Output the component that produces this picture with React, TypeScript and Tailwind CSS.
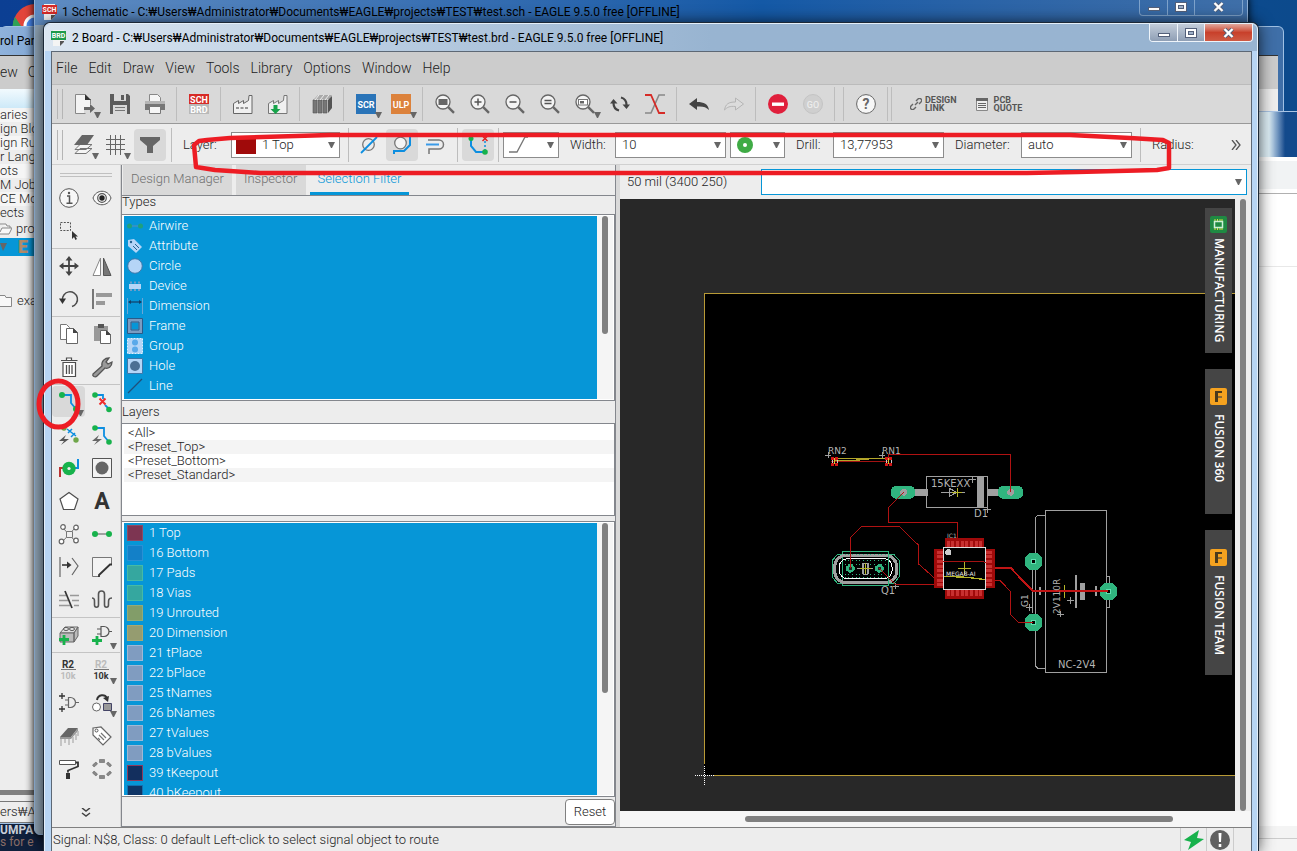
import { useState } from 'react';
import type { ReactNode } from 'react';
import { clsx } from 'clsx';

const GREEN = '#17b24c';
const BLUE = '#0d8ee0';
const DARK = '#4d4d4d';

const lens = (
  <>
    <circle cx="8" cy="8" r="7" fill="#f4f4f4" stroke="#666" strokeWidth="1.3" />
    <path d="M13.2 13.2l5.8 5.6" stroke="#666" strokeWidth="2.4" />
  </>
);

const icons: Record<string, ReactNode> = {
  newFile: (
    <>
      <path d="M10 .5H.5v19h10M15.500 5v5" fill="none" stroke="#888" />
      <path d="M1 1h9l5 5v8H1z" fill="#f3f3f3" />
      <path d="M1 13h8v6H1z" fill="#f3f3f3" />
      <path d="M10 0l6 6h-6z" fill="#333" />
      <path d="M9 13h6v-3l5 4.500-5 4.500v-3H9z" fill="#666" />
    </>
  ),
  save: (
    <>
      <path d="M0 0h18l2 2v18H0z" fill="#5c5c5c" />
      <path d="M4 0h12v7H4zM3 11h14v9H3z" fill="#d9d9d9" />
      <path d="M11 1h3v5h-3z" fill="#5c5c5c" />
      <path d="M5 13.500h10M5 16.500h10" stroke="#777" />
    </>
  ),
  print: (
    <>
      <path d="M4.500.5h8l3 3V8h-11z" fill="#f6f6f6" stroke="#888" />
      <path d="M0 7h20v8H0z" fill="#b5b5b5" />
      <path d="M0 10h20v6H0z" fill="#777" />
      <path d="M4.500 12.500h11v7h-11z" fill="#f6f6f6" stroke="#777" />
    </>
  ),
  schBrd: (
    <>
      <path d="M0 0h20v10H0z" fill="#d62b27" />
      <path d="M0 10h20v10H0z" fill="#b9b9b9" />
      <text x="10" y="8.500" textAnchor="middle" fontSize="9" fontWeight="700" fill="#fff">SCH</text>
      <text x="10" y="18.500" textAnchor="middle" fontSize="9" fontWeight="700" fill="#fff">BRD</text>
    </>
  ),
  factory: (
    <>
      <path d="M.5 19.500v-10l5-3v3l5-3v3l5-3 .5-5h3v18z" fill="#f0f0f0" stroke="#666" />
      <path d="M3 14h3m1.500 0h3m1.500 0h3" stroke="#777" strokeWidth="1.600" />
    </>
  ),
  factoryDown: (
    <>
      <path d="M.5 19.500v-10l5-3v3l5-3v3l5-3 .5-5h3v18z" fill="#f0f0f0" stroke="#777" />
      <path d="M5.500 11h4v4h3l-5 5-5-5h3z" fill="#17a34a" />
    </>
  ),
  books: (
    <>
      <path d="M1 6l5-5h14l-2 4H1z" fill="#aaa" />
      <path d="M1 6h4v13H1zM6 6h4v13H6zM11 6h4v13h-4z" fill="#777" stroke="#555" strokeWidth=".6" />
      <path d="M16 6l4-4v12l-4 5z" fill="#555" />
      <path d="M3 6l4-5M8 6l4-5M13 6l4-5" stroke="#eee" />
    </>
  ),
  scr: (
    <>
      <path d="M0 0h20v20H0z" fill="#2a74b8" />
      <text x="10" y="13.500" textAnchor="middle" fontSize="9" fontWeight="700" fill="#fff">SCR</text>
    </>
  ),
  ulp: (
    <>
      <path d="M0 0h20v20H0z" fill="#dc823c" />
      <text x="10" y="13.500" textAnchor="middle" fontSize="9" fontWeight="600" fill="#fff">ULP</text>
    </>
  ),
  zoomFit: <>{lens}<rect x="3.500" y="5" width="9" height="6" fill="#666" /></>,
  zoomIn: <>{lens}<path d="M4.500 8h7M8 4.500v7" stroke="#555" strokeWidth="1.500" /></>,
  zoomOut: <>{lens}<path d="M4.500 8h7" stroke="#555" strokeWidth="1.500" /></>,
  zoomRedraw: <>{lens}<path d="M4.500 6.500h7M4.500 9.500h7" stroke="#555" strokeWidth="1.400" /></>,
  zoomSelect: <>{lens}<rect x="3.500" y="5.500" width="9" height="5.500" fill="#fff" stroke="#777" /><path d="M5 7h4v2.500H5z" fill="#666" /></>,
  refresh: (
    <>
      <path d="M3.500 9c0 4 1.500 6.500 5.500 7.500M16.500 11c0-4-1.500-6.500-5.500-7.500" fill="none" stroke="#444" strokeWidth="2.200" />
      <path d="M0 9.500L3.500 5 7.500 9.500zM12.500 10.500h7.500L16.500 15z" fill="#444" />
    </>
  ),
  cross: (
    <>
      <path d="M20 1h-6L6 19H0" fill="none" stroke="#888" strokeWidth="1.600" />
      <path d="M0 1h6l8 18h6" fill="none" stroke="#d62b27" strokeWidth="1.800" />
    </>
  ),
  undo: <path d="M0 10l8-6v4c7 0 11 2 12 8-3-3-6-4-12-3.500V16z" fill="#444" />,
  redo: <path d="M19.500 10l-8-6v4c-7 0-10 2-11 8 3-3 5-4 11-3.500V16z" fill="#dcdcdc" stroke="#b5b5b5" />,
  stop: (
    <>
      <circle cx="10" cy="10" r="10" fill="#e0203c" />
      <path d="M4 8.500h12v3.400H4z" fill="#fff" />
    </>
  ),
  go: (
    <>
      <circle cx="10" cy="10" r="9.500" fill="#cfcfcf" stroke="#c4c4c4" />
      <text x="10" y="13.500" textAnchor="middle" fontSize="9" fontWeight="500" fill="#ececec">GO</text>
    </>
  ),
  help: (
    <>
      <circle cx="10" cy="10" r="9.400" fill="#f7f7f7" stroke="#666" />
      <text x="10" y="15" textAnchor="middle" fontSize="14" fontWeight="700" fill="#666">?</text>
    </>
  ),
  layers: (
    <>
      <path d="M1 18.500l5-5h12l-6 5zM1 14.500l5-5h12l-6 5z" fill="#f5f5f5" stroke="#777" />
      <path d="M0 10L8 0h12l-7 10z" fill="#666" />
    </>
  ),
  grid: <path d="M4.500 0v20M9.500 0v20M14.500 0v20M0 4.500h19M0 9.500h19M0 14.500h19" stroke="#666" />,
  filter: <path d="M0 2h20v3l-7 6v7H7v-7L0 5z" fill="#666" />,
  viaOff: (
    <>
      <circle cx="9.500" cy="9.500" r="5.800" fill="none" stroke="#777" strokeWidth="1.300" />
      <path d="M2 18L18 2" stroke={BLUE} strokeWidth="1.800" />
    </>
  ),
  viaAround: (
    <>
      <circle cx="8.500" cy="8" r="5.800" fill="#f5f5f5" stroke="#777" strokeWidth="1.300" />
      <path d="M2 19v-3h10l6-6V2" fill="none" stroke={BLUE} strokeWidth="2" />
    </>
  ),
  push: (
    <>
      <path d="M2 5h11a4.500 4.500 0 010 9H3v5" fill="none" stroke="#777" strokeWidth="1.500" />
      <path d="M0 9.500h13" stroke="#3a9be8" strokeWidth="2" />
    </>
  ),
  loopRemove: (
    <>
      <path d="M3 4v7l5 6h8" fill="none" stroke={BLUE} strokeWidth="2" />
      <path d="M17 6v9" stroke={BLUE} strokeWidth="1.500" strokeDasharray="2 2" />
      <path d="M14.500 1l5 5M19.500 1l-5 5" stroke="#e02020" strokeWidth="1.500" />
      <circle cx="3" cy="3.500" r="2.500" fill={GREEN} />
      <circle cx="17" cy="17" r="2.800" fill={GREEN} />
    </>
  ),
  info: (
    <>
      <circle cx="10" cy="10" r="9.300" fill="#f7f7f7" stroke="#555" />
      <path d="M8 8h2.500v7M7.500 15.300h6" fill="none" stroke="#555" strokeWidth="1.500" />
      <circle cx="10" cy="5" r="1.200" fill="#555" />
    </>
  ),
  eye: (
    <>
      <path d="M1 10c3-9 15-9 18 0-3 9-15 9-18 0z" fill="#f7f7f7" stroke="#555" />
      <circle cx="10" cy="10" r="4.300" fill="none" stroke="#555" strokeWidth="1.200" />
      <circle cx="10" cy="10" r="2.700" fill="#222" />
    </>
  ),
  marquee: (
    <>
      <path d="M1.500 1.500h10v8h-10z" fill="none" stroke="#555" strokeDasharray="2 1.300" />
      <path d="M13 10v8l2-2 1.500 3 1.500-1-1.500-2.500H19z" fill="#333" />
    </>
  ),
  move: (
    <>
      <path d="M10 3v14M3 10h14" stroke="#444" strokeWidth="1.800" />
      <path d="M10 0l3.500 4.500h-7zM10 20l3.500-4.500h-7zM0 10l4.500-3.500v7zM20 10l-4.500-3.500v7z" fill="#444" />
    </>
  ),
  mirror: (
    <>
      <path d="M8.500 2v17.500H1z" fill="#fff" stroke="#888" />
      <path d="M11.500 2v17.500H19z" fill="#777" stroke="#555" />
    </>
  ),
  rotate: (
    <>
      <path d="M3.500 11A7.500 7.500 0 1113 17.500" fill="none" stroke={DARK} strokeWidth="1.500" />
      <path d="M0 9.500h7l-3.500 5.500z" fill="#333" />
    </>
  ),
  align: (
    <>
      <path d="M1 0v20" stroke="#444" strokeWidth="1.400" />
      <path d="M4 4h16v4H4zM4 12h9v4H4z" fill="#999" />
    </>
  ),
  copy: (
    <>
      <path d="M1.500.5h6l3 3v12h-9z" fill="#fff" stroke="#777" />
      <path d="M7.500 4.500h7l4 4v11h-11z" fill="#fff" stroke="#666" />
      <path d="M14 4l5 5h-5z" fill="#444" />
    </>
  ),
  paste: (
    <>
      <path d="M2 2h14v15H2z" fill="#999" />
      <path d="M6 0h6v4H6z" fill="#555" />
      <path d="M8.500 6.500h6l4 4v9h-10z" fill="#fff" stroke="#666" />
      <path d="M14 6l5 5h-5z" fill="#444" />
    </>
  ),
  trash: (
    <>
      <path d="M4 5.500h12.500v14H4zM2 3.500h16.500M7.500 3V1h5v2" fill="#fff" stroke={DARK} strokeWidth="1.200" />
      <path d="M7.500 8v9M10.250 8v9M13 8v9" stroke={DARK} strokeWidth="1.300" />
    </>
  ),
  wrench: <path d="M1 17l9-8c-1-5 3-8 7-8l-3 4 2 2 4-2c0 5-4 7-7 6l-8 8c-2 2-5 0-4-2z" fill="#999" stroke="#555" strokeWidth="1.300" />,
  route: (
    <>
      <path d="M3 3h9v8l5 6" fill="none" stroke={BLUE} strokeWidth="1.800" />
      <circle cx="3" cy="3" r="3" fill={GREEN} />
      <circle cx="17" cy="17" r="3" fill={GREEN} />
    </>
  ),
  ripup: (
    <>
      <path d="M3 3h8v4M13 13l4 4" fill="none" stroke={BLUE} strokeWidth="1.800" />
      <circle cx="3" cy="3" r="2.800" fill={GREEN} />
      <circle cx="17" cy="17.500" r="2.800" fill={GREEN} />
      <path d="M7.500 6.500l6 6M13.500 6.500l-6 6" stroke="#ee2e2e" strokeWidth="2" />
    </>
  ),
  fanout: (
    <>
      <circle cx="5" cy="3" r="2.700" fill="#6fa64a" />
      <circle cx="17" cy="15" r="2.700" fill="#6fa64a" />
      <path d="M9 8l4-4M12 12l4-4M8 4l9 7" stroke={BLUE} strokeWidth="1.500" />
      <path d="M7 10l-7 6h5l-3 4 8-6H5z" fill="#555" />
    </>
  ),
  autoroute: (
    <>
      <path d="M3 3h9v8l5 6" fill="none" stroke={BLUE} strokeWidth="1.800" />
      <circle cx="3" cy="3" r="2.800" fill={GREEN} />
      <circle cx="17" cy="17" r="2.800" fill={GREEN} />
      <path d="M7 10l-7 6h5l-3 4 8-6H5z" fill="#666" />
    </>
  ),
  via: (
    <>
      <path d="M1 19v-9h6" fill="none" stroke="#b33" strokeWidth="2" />
      <path d="M13 10h6V1" fill="none" stroke={BLUE} strokeWidth="2" />
      <circle cx="10" cy="10.500" r="6.700" fill={GREEN} />
      <circle cx="10" cy="10.500" r="1.600" fill="#eee" />
    </>
  ),
  hole: (
    <>
      <path d="M.5.5h19v19H.5z" fill="#f3f3f3" stroke="#555" />
      <circle cx="10" cy="10" r="6.500" fill="#666" />
    </>
  ),
  polygon: <path d="M10 1.500l9 6.500-3.500 10.500h-11L1 8z" fill="#fff" stroke={DARK} strokeWidth="1.200" />,
  text: <text x="10" y="18" textAnchor="middle" fontSize="23" fontWeight="700" fill="#333">A</text>,
  net: (
    <>
      <path d="M4 4l12 13M16 4L4 17" stroke="#777" />
      <path d="M7.500 7.500h6v6h-6z" fill="#eee" stroke="#777" />
      <g fill="#fff" stroke="#666" strokeWidth="1.200">
        <circle cx="4" cy="3" r="2.300" /><circle cx="17" cy="3.500" r="2.300" />
        <circle cx="2.500" cy="17.500" r="2.300" /><circle cx="17" cy="16.500" r="2.300" />
      </g>
    </>
  ),
  signal: (
    <>
      <path d="M3 10h14" stroke="#999" strokeWidth="1.800" />
      <circle cx="3" cy="10" r="3" fill={GREEN} />
      <circle cx="17" cy="10" r="3" fill={GREEN} />
    </>
  ),
  split: (
    <>
      <path d="M1 0v20M13 1l6 8-6 9" fill="none" stroke="#666" strokeWidth="1.200" />
      <path d="M3 8h6" stroke="#333" strokeWidth="1.600" />
      <path d="M8 4.500L12.500 8 8 11.500z" fill="#333" />
    </>
  ),
  miter: (
    <>
      <path d="M19.500 7V.5H.5v19H7" fill="#f3f3f3" stroke="#777" />
      <path d="M20 7.500h-2L7 18v2" fill="none" stroke="#333" strokeWidth="1.800" />
    </>
  ),
  slice: (
    <>
      <path d="M0 5.500h7M0 10.500h9M0 15.500h11M11 5.500h9M13 10.500h7M15 15.500h5" stroke="#999" strokeWidth="1.300" />
      <path d="M6 1l7 17" stroke="#333" strokeWidth="1.700" />
    </>
  ),
  meander: <path d="M0 8c3 0 2.500 2 2.500 7 0 3 4 3 4 0V4c0-4 6-4 6 0v11c0 3 4 3 4 0 0-5-.5-7 3.500-7" fill="none" stroke="#555" strokeWidth="1.600" />,
  addPart: (
    <>
      <path d="M1 8l5-6h13l-4 6z" fill="#ddd" stroke="#666" />
      <path d="M1 8h14v9H1zM15 8l4-6v9l-4 6z" fill="#bbb" stroke="#666" />
      <ellipse cx="7" cy="4" rx="2.500" ry="1.500" fill="#eee" stroke="#555" /><ellipse cx="13" cy="4" rx="2.500" ry="1.500" fill="#eee" stroke="#555" />
      <path d="M0 14.500h10M5 10v10" stroke={GREEN} strokeWidth="2.800" />
    </>
  ),
  addGate: (
    <>
      <path d="M9 1.500h3a5 5 0 010 10H9zM5 4h4M5 9h4M17 6.500h3" fill="none" stroke="#555" strokeWidth="1.200" />
      <path d="M0 15.500h10M5 11v9" stroke={GREEN} strokeWidth="2.800" />
    </>
  ),
  name: (
    <>
      <text x="9" y="8" textAnchor="middle" fontSize="10" fontWeight="700" fill="#333">R2</text>
      <path d="M2 9.500h15" stroke="#777" />
      <text x="9" y="18.500" textAnchor="middle" fontSize="9" fontWeight="700" fill="#bbb">10k</text>
    </>
  ),
  value: (
    <>
      <text x="9" y="8" textAnchor="middle" fontSize="10" fontWeight="700" fill="#bbb">R2</text>
      <path d="M2 9.500h15" stroke="#777" />
      <text x="9" y="18.500" textAnchor="middle" fontSize="9" fontWeight="700" fill="#333">10k</text>
    </>
  ),
  invoke: (
    <>
      <path d="M9.500 4.500h2a5 5 0 010 10h-2zM6 7h3M6 12h3M17 9.500h3" fill="none" stroke="#666" strokeWidth="1.200" />
      <path d="M0 3h6M3 0v6M0 16h6M3 13v6" stroke="#333" strokeWidth="1.300" />
    </>
  ),
  replace: (
    <>
      <circle cx="4.500" cy="14" r="4" fill="#fff" stroke="#666" />
      <path d="M11.500 10.500h8v7h-8z" fill="#999" stroke="#446" />
      <path d="M5 7c1-6 8-6 10-2" fill="none" stroke="#333" strokeWidth="2" />
      <path d="M11 5l6-2-1 6z" fill="#333" />
    </>
  ),
  chip: (
    <>
      <path d="M1 11L9 2h10l-7 9z" fill="#666" />
      <path d="M1 11h11v2H1zM12 11l7-9v3l-7 8z" fill="#999" />
      <path d="M2 13v7M6 13v4M10 13v6M14 11v6M17 8v6M19 5v5" stroke="#bbb" strokeWidth="1.600" />
    </>
  ),
  tag: (
    <>
      <path d="M1 2l8-1 10 10-8 8L1 9z" fill="#fff" stroke="#666" strokeWidth="1.200" />
      <circle cx="4.500" cy="4.500" r="1.500" fill="#fff" stroke="#555" />
      <path d="M7 9l5 5M9 7l5 5M6 12l2 2" stroke="#777" strokeWidth="1.200" />
    </>
  ),
  paint: (
    <>
      <path d="M.5 1.500h16v4H.5z" fill="#fff" stroke="#555" />
      <path d="M17 3.500h2v4l-10 4v2" fill="none" stroke="#333" strokeWidth="1.800" />
      <path d="M7 14h4v6H7z" fill="#333" />
    </>
  ),
  optimize: (
    <g fill="#888" stroke="#666" strokeWidth=".6">
      <path d="M7.500.5h5v3h-5zM7.500 16.500h5v3h-5z" />
      <path d="M.5 6l3.500-3 1.500 2-3.500 3zM19.500 6L16 3l-1.500 2 3.500 3zM.5 14L4 17l1.500-2-3.500-3zM19.500 14L16 17l-1.500-2 3.500-3z" />
    </g>
  ),
};

function Icon({ name }: { name: string }) {
  return (
    <svg width="20" height="20" viewBox="0 0 20 20" className="shrink-0 overflow-visible font-[Roboto,sans-serif]">
      {icons[name]}
    </svg>
  );
}

function Caret({ className }: { className?: string }) {
  return (
    <svg width="7" height="6" viewBox="0 0 7 6" className={clsx('pointer-events-none absolute', className)}>
      <path d="M0 0h7L4 6H3z" fill="#666" />
    </svg>
  );
}

interface ToolProps {
  icon: string;
  label: string;
  menu?: boolean;
  active?: boolean;
  className?: string;
}

function Tool({ icon, label, menu, active, className }: ToolProps) {
  return (
    <button
      type="button"
      aria-label={label}
      className={clsx('relative flex shrink-0 items-center justify-center', active && 'rounded-sm bg-[#d9d9d9]', className)}
    >
      <Icon name={icon} />
      {menu && <Caret className="right-px bottom-px" />}
    </button>
  );
}

const Grip = () => <div className="h-[30px] w-[6px] shrink-0 border-x border-[#b5b5b5]" />;

type BarItem = [icon: string, label: string, menu?: boolean] | null;

const mainBar: BarItem[] = [
  ['newFile', 'New', true], ['save', 'Save'], ['print', 'Print'], null,
  ['schBrd', 'Switch to schematic'], null,
  ['factory', 'CAM processor'], ['factoryDown', 'Generate CAM data'], null,
  ['books', 'Library'], null,
  ['scr', 'Execute script', true], ['ulp', 'Run ULP', true], null,
  ['zoomFit', 'Zoom to fit'], ['zoomIn', 'Zoom in'], ['zoomOut', 'Zoom out'], ['zoomRedraw', 'Redraw'],
  ['zoomSelect', 'Zoom select', true], ['refresh', 'Refresh'], ['cross', 'Cross'], null,
  ['undo', 'Undo'], ['redo', 'Redo'], null,
  ['stop', 'Stop'], ['go', 'Go'], null, null,
  ['help', 'Help'], null,
];

const toolRows: ([ToolProps, ToolProps?] | null)[] = [
  [{ icon: 'info', label: 'Info' }, { icon: 'eye', label: 'Show' }],
  [{ icon: 'marquee', label: 'Group' }],
  null,
  [{ icon: 'move', label: 'Move' }, { icon: 'mirror', label: 'Mirror' }],
  [{ icon: 'rotate', label: 'Rotate' }, { icon: 'align', label: 'Align' }],
  null,
  [{ icon: 'copy', label: 'Copy' }, { icon: 'paste', label: 'Paste' }],
  [{ icon: 'trash', label: 'Delete' }, { icon: 'wrench', label: 'Change' }],
  null,
  [{ icon: 'route', label: 'Route', menu: true, active: true }, { icon: 'ripup', label: 'Ripup' }],
  [{ icon: 'fanout', label: 'Fanout' }, { icon: 'autoroute', label: 'Autorouter' }],
  [{ icon: 'via', label: 'Via' }, { icon: 'hole', label: 'Hole' }],
  [{ icon: 'polygon', label: 'Polygon' }, { icon: 'text', label: 'Text' }],
  [{ icon: 'net', label: 'Ratsnest' }, { icon: 'signal', label: 'Signal' }],
  [{ icon: 'split', label: 'Split' }, { icon: 'miter', label: 'Miter' }],
  [{ icon: 'slice', label: 'Slice' }, { icon: 'meander', label: 'Meander' }],
  null,
  [{ icon: 'addPart', label: 'Add part' }, { icon: 'addGate', label: 'Add gate', menu: true }],
  null,
  [{ icon: 'name', label: 'Name' }, { icon: 'value', label: 'Value', menu: true }],
  [{ icon: 'invoke', label: 'Invoke' }, { icon: 'replace', label: 'Replace', menu: true }],
  [{ icon: 'chip', label: 'Package' }, { icon: 'tag', label: 'Attribute' }],
  [{ icon: 'paint', label: 'Paint' }, { icon: 'optimize', label: 'Optimize' }],
];

const PALE = '#b5d5f7';
const types: [string, ReactNode][] = [
  ['Airwire', <><path d="M2 8h12" stroke="#3f90c0" strokeWidth="1.500" /><circle cx="2.500" cy="8" r="2.500" fill="#1fa07c" /><circle cx="13.500" cy="8" r="2.500" fill="#1fa07c" /></>],
  ['Attribute', <><path d="M1 2l6-1 8 8-6 6-8-7z" fill={PALE} /><circle cx="4" cy="4" r="1.200" fill="#27618f" /><path d="M6 8l4 4M8 6l4 4" stroke="#27618f" /></>],
  ['Circle', <circle cx="8" cy="8" r="7.300" fill={PALE} stroke="#3d78ab" />],
  ['Device', <><path d="M2 6h12v5H2z" fill={PALE} /><path d="M4 3.500v2M8 3.500v2M12 3.500v2M4 11v2M8 11v2M12 11v2" stroke="#6f9dc8" strokeWidth="2" /></>],
  ['Dimension', <><path d="M.5 0v16M15.500 0v16" stroke="#6ba6d6" /><path d="M2 4h12" stroke="#143f66" strokeWidth="1.200" /><path d="M1 4l3-2v4zM15 4l-3-2v4z" fill="#143f66" /></>],
  ['Frame', <><path d="M2.500 2.500h11v11h-11z" fill="none" stroke="#7a9cc2" strokeWidth="4" /><path d="M.5.5h15v15H.5zM4 4h8v8H4z" fill="none" stroke="#2a5a88" /></>],
  ['Group', <><path d="M.5.5h15v15H.5z" fill={PALE} stroke="#e2f0ff" strokeDasharray="2 1" /><circle cx="8" cy="4.500" r="3" fill="#5aa9ea" /><circle cx="8" cy="11.500" r="3" fill="#5aa9ea" /></>],
  ['Hole', <><path d="M.5.5h15v15H.5z" fill={PALE} stroke="#3d78ab" /><circle cx="8" cy="8" r="5" fill="#4c6f94" /></>],
  ['Line', <path d="M1 15L15 1" stroke="#1f4f7a" strokeWidth="1.200" />],
];

const layers = [
  { name: '1 Top', swatch: 'bg-[#7d3552] border-[#8d4a66]' },
  { name: '16 Bottom', swatch: 'bg-[#1380c8] border-[#2a90d4]' },
  { name: '17 Pads', swatch: 'bg-[#35a79f] border-[#46baa4]' },
  { name: '18 Vias', swatch: 'bg-[#35a79f] border-[#46baa4]' },
  { name: '19 Unrouted', swatch: 'bg-[#829d69] border-[#90ab78]' },
  { name: '20 Dimension', swatch: 'bg-[#959c70] border-[#a8a870]' },
  { name: '21 tPlace', swatch: 'bg-[#809cc0] border-[#9fb8d4]' },
  { name: '22 bPlace', swatch: 'bg-[#809cc0] border-[#9fb8d4]' },
  { name: '25 tNames', swatch: 'bg-[#809cc0] border-[#9fb8d4]' },
  { name: '26 bNames', swatch: 'bg-[#809cc0] border-[#9fb8d4]' },
  { name: '27 tValues', swatch: 'bg-[#809cc0] border-[#9fb8d4]' },
  { name: '28 bValues', swatch: 'bg-[#809cc0] border-[#9fb8d4]' },
  { name: '39 tKeepout', swatch: 'bg-[#132f5e] border-[#8d3a5c]' },
  { name: '40 bKeepout', swatch: 'bg-[#0f3566] border-[#1370b0]' },
];

const presets = ['<All>', '<Preset_Top>', '<Preset_Bottom>', '<Preset_Standard>'];

interface ComboProps {
  id: string;
  label: string;
  value?: string;
  className: string;
  children?: ReactNode;
}

function Combo({ id, label, value = '', className, children }: ComboProps) {
  return (
    <div className={clsx('relative h-[26px] shrink-0', className)}>
      <select
        id={id}
        aria-label={label}
        className={clsx(
          'h-full w-full appearance-none border border-[#8c8c8c] bg-white text-[13px] outline-none',
          id === 'layer' ? 'pl-[30px]' : 'pl-1.5'
        )}
      >
        <option>{value}</option>
      </select>
      {children}
      <Caret className="top-[10px] right-[5px]" />
    </div>
  );
}

const Sep = ({ className }: { className?: string }) => (
  <div className={clsx('h-[34px] w-px shrink-0 bg-[#bdbdbd]', className)} />
);

function ParameterBar() {
  return (
    <div className="flex h-[41px] shrink-0 items-center overflow-hidden border-b border-[#d0d0d0] bg-[#ededed] pt-0.5 pl-[5px] text-[13px]">
      <Grip />
      <Tool icon="layers" label="Layer settings" menu className="ml-[5px] h-[30px] w-8" />
      <Tool icon="grid" label="Grid" menu className="h-[30px] w-8" />
      <Tool icon="filter" label="Filter" active className="ml-0.5 h-8 w-8" />
      <Sep className="ml-[5px]" />
      <label htmlFor="layer" className="ml-[11px] w-12">Layer:</label>
      <Combo id="layer" label="Layer" value="1 Top" className="w-[109px]">
        <span className="pointer-events-none absolute top-1 left-[5px] h-[18px] w-5 bg-[#a00a0a]" />
      </Combo>
      <Sep className="ml-2" />
      <Tool icon="viaOff" label="Ignore obstacles" className="ml-[3px] h-8 w-[34px]" />
      <Tool icon="viaAround" label="Walk around" active className="h-8 w-8" />
      <Tool icon="push" label="Push" className="h-8 w-9" />
      <Sep className="mx-[3px]" />
      <Tool icon="loopRemove" label="Loop removal" active className="ml-px h-8 w-8" />
      <Sep className="mx-1" />
      <Combo id="bend" label="Bend style" className="w-[56px]">
        <svg width="20" height="20" viewBox="0 0 20 20" className="pointer-events-none absolute top-[3px] left-1.5">
          <path d="M0 17h8l8-15h3" fill="none" stroke="#777" strokeWidth="1.300" />
        </svg>
      </Combo>
      <label htmlFor="width" className="ml-[11px] w-[45px]">Width:</label>
      <Combo id="width" label="Width" value="10" className="w-[111px]" />
      <Combo id="via-shape" label="Via shape" className="ml-1 w-[55px]">
        <span className="pointer-events-none absolute top-[5px] left-[7px] flex h-4 w-4 items-center justify-center rounded-full bg-[#3fab45]">
          <span className="h-1 w-1 rounded-full bg-white" />
        </span>
      </Combo>
      <label htmlFor="drill" className="ml-[11px] w-[37px]">Drill:</label>
      <Combo id="drill" label="Drill" value="13,77953" className="w-[111px]" />
      <label htmlFor="diameter" className="ml-[11px] w-[66px] shrink-0">Diameter:</label>
      <Combo id="diameter" label="Diameter" value="auto" className="w-[111px]" />
      <Sep className="ml-2" />
      <span className="ml-[11px]">Radius:</span>
      <button type="button" aria-label="More" className="mr-2.5 ml-auto">
        <svg width="10" height="10" viewBox="0 0 10 10">
          <path d="M1 0l4 5-4 5M5 0l4 5-4 5" fill="none" stroke="#555" strokeWidth="1.300" />
        </svg>
      </button>
    </div>
  );
}

function SelectionFilter() {
  const [tab, setTab] = useState('Selection Filter');

  return (
    <div className="flex w-[495px] shrink-0 flex-col border-x border-[#84878d]">
      <div role="tablist" className="flex h-[31px] shrink-0 items-stretch gap-1 border-b border-[#84878d] pl-px text-[13px]">
        {['Design Manager', 'Inspector', 'Selection Filter'].map((name) => (
          <button
            key={name}
            type="button"
            role="tab"
            aria-selected={tab === name}
            onClick={() => setTab(name)}
            className={clsx(
              'border-b-[3px] px-2',
              tab === name ? 'border-[#0696d7] text-[#0696d7]' : 'border-[#d9d9d9] bg-[#d9d9d9] text-[#707070]'
            )}
          >
            {name}
          </button>
        ))}
      </div>
      <h2 className="h-[18px] shrink-0 text-[13px] leading-3">Types</h2>
      <div className="flex h-[187px] shrink-0 justify-between border border-l-0 border-[#84878d] bg-white p-px pl-0.5">
        <ul className="flex-1 overflow-hidden bg-[#0696d7] text-[13px] text-white">
          {types.map(([name, icon]) => (
            <li key={name} className="flex h-5 items-center gap-1.5 pl-[3px]">
              <svg width="16" height="16" viewBox="0 0 16 16">{icon}</svg>
              {name}
            </li>
          ))}
        </ul>
        <div className="w-4 bg-[#f5f5f5] pl-[5px]">
          <div className="h-[118px] w-[6px] rounded-full bg-[#808080]" />
        </div>
      </div>
      <h2 className="h-[22px] shrink-0 text-[13px] leading-[22px]">Layers</h2>
      <ul className="h-[93px] shrink-0 border border-l-0 border-[#84878d] bg-white pt-0.5 pl-0.5 text-[13px] leading-[14px]">
        {presets.map((name) => (
          <li key={name} className="h-[14px] pl-1 even:bg-[#f4f4f4]">{name}</li>
        ))}
      </ul>
      <div className="mt-[5px] flex min-h-0 flex-1 justify-between border border-l-0 border-[#84878d] bg-white p-px pl-0.5">
        <ul className="flex-1 overflow-hidden bg-[#0696d7] text-[13px] text-white">
          {layers.map(({ name, swatch }) => (
            <li key={name} className="flex h-5 items-center gap-1.5 pl-[3px]">
              <span className={clsx('h-4 w-4 border', swatch)} />
              {name}
            </li>
          ))}
        </ul>
        <div className="w-4 bg-[#f5f5f5] pl-[5px]">
          <div className="h-[170px] w-[6px] rounded-full bg-[#808080]" />
        </div>
      </div>
      <div className="flex h-[30px] shrink-0 items-center justify-end border-b border-[#84878d]">
        <button type="button" className="h-[26px] w-[50px] rounded-[4px] border border-[#808080] bg-white text-[13px]">Reset</button>
      </div>
    </div>
  );
}

const pins = [0, 1, 2, 3, 4, 5, 6, 7];

function Plus({ x, y, r = 9, color = '#a0a0a0' }: { x: number; y: number; r?: number; color?: string }) {
  return <path d={`M${x - r} ${y}h${r * 2}M${x} ${y - r}v${r * 2}`} stroke={color} strokeWidth="3" fill="none" />;
}

function OctPad({ x, y }: { x: number; y: number }) {
  return (
    <g transform={`translate(${x} ${y})`}>
      <path d="M-11-26h22l15 15v22l-15 15h-22l-15-15v-22z" fill="#30b57f" />
      <path d="M-6-6H6V6H-6z" fill="#000" stroke="#5fe0b0" strokeWidth="3" />
    </g>
  );
}

function Board() {
  return (
    <svg className="absolute inset-0 h-full w-full font-['DejaVu_Sans',sans-serif] font-normal" shapeRendering="crispEdges">
      <rect x="84" y="94" width="100%" height="482" fill="#000" />
      <path d="M84.500 565V94.500" stroke="#b89a36" />
      <line x1="84" y1="94.500" x2="100%" y2="94.500" stroke="#b89a36" />
      <line x1="94" y1="576.500" x2="100%" y2="576.500" stroke="#b89a36" />
      <path d="M75 576.500h20M84.500 567v20" stroke="#fff" strokeDasharray="1 1" />
      <svg x="180" y="231" width="340" height="260" viewBox="0 0 1020 780">
        {/* resistor networks */}
        <path d="M94 94h172" stroke="#a31212" strokeWidth="3" />
        <path d="M104 86h160M104 92h50l52-5" stroke="#b3a62a" strokeWidth="4" fill="none" />
        <path d="M94 82h7v7h-7zM106 82h7v7h-7zM94 100h7v7h-7zM106 100h7v7h-7zM256 82h7v7h-7zM268 82h7v7h-7zM256 100h7v7h-7zM268 100h7v7h-7z" fill="#d01515" />
        <path d="M96 89v10M111 89v10M258 89v10M273 89v10" stroke="#ccc" strokeWidth="3" />
        <path d="M104 85v18M265 83v20" stroke="#d8ca30" strokeWidth="4" />
        <Plus x={85} y={76} />
        <Plus x={247} y={76} />

        {/* diode D1 */}
        <path d="M340 177h44v20h-44zM563 177h40v20h-40zM531 139h21v94h-21z" fill="#a0a0a0" />
        <path d="M379 139h184v94H379z" fill="none" stroke="#a0a0a0" strokeWidth="3" />
        <rect x="273" y="168" width="72" height="38" rx="14" fill="#30b57f" />
        <rect x="594" y="168" width="75" height="38" rx="14" fill="#30b57f" />
        <circle cx="311" cy="187" r="10" fill="#a0a0a0" />
        <circle cx="632" cy="187" r="10" fill="#a0a0a0" />
        <path d="M423 187h72M448 175v24l22-12zM471 175v24" fill="none" stroke="#a0a0a0" strokeWidth="3" />
        <path d="M455 187h30M472 173v28" stroke="#b5b52a" strokeWidth="3" />
        <Plus x={517} y={148} r={10} />
        <Plus x={562} y={239} r={10} />

        {/* crystal Q1 */}
        <path d="M128 364h138v102H128zM112 374h170l16 18v48l-16 20H112l-16-20v-48z" fill="none" stroke="#30b57f" strokeWidth="3" />
        <rect x="104" y="376" width="186" height="82" rx="34" fill="none" stroke="#a0a0a0" strokeWidth="9" />
        <rect x="118" y="386" width="158" height="60" rx="24" fill="none" stroke="#fff" strokeWidth="3" />
        <path d="M134 372h130M134 392h126M134 404h126M134 432h126M134 443h126" stroke="#30b57f" strokeWidth="3" strokeDasharray="3 8" />
        <path d="M266 366v98" stroke="#30b57f" strokeWidth="3" />
        <path d="M172 416h14v-14M186 400v32M206 400v32M206 416h12M191 400h10v32h-10z" fill="none" stroke="#a0a0a0" strokeWidth="3" />
        <Plus x={196} y={416} r={16} color="#b5b52a" />
        {[151, 238].map((x) => (
          <g key={x}>
            <path d={`M${x} 401l14 10v9l-14 10-14-10v-9z`} fill="#30b57f" />
            <circle cx={x} cy="415" r="5" fill="#222" />
          </g>
        ))}
        <Plus x={287} y={469} />

        {/* controller IC1 */}
        <path d="M435 324h117v30H435zM435 478h117v29H435zM402 357h29v117h-29zM556 357h29v117h-29z" fill="#a00a0a" />
        {pins.map((i) => (
          <g key={i} fill="#c83030">
            <rect x={440 + i * 14} y="334" width="9" height="18" />
            <rect x={440 + i * 14} y="480" width="9" height="18" />
            <rect x="411" y={362 + i * 14} width="19" height="9" />
            <rect x="558" y={362 + i * 14} width="19" height="9" />
          </g>
        ))}
        <rect x="430" y="352" width="127" height="127" fill="#000" stroke="#ddd" strokeWidth="3" />
        <circle cx="445" cy="367" r="9" fill="#ccc" />
        <path d="M430 395h120l7 4" fill="none" stroke="#a31212" strokeWidth="3" />
        <path d="M432 439l70 3 54 7" fill="none" stroke="#b5b52a" strokeWidth="4" />
        <Plus x={493} y={415} r={20} color="#b5b52a" />

        {/* battery G1 */}
        <path d="M737 241h183v486H737zM737 256h-24l-7 8v443l8 8h23M706 480v18M920 439h9v93h-9" fill="none" stroke="#a0a0a0" strokeWidth="3" />
        <path d="M698 420v130" stroke="#a0a0a0" strokeWidth="3" />
        <path d="M828 435v98M719 471v24M888 468v30" stroke="#a0a0a0" strokeWidth="5" />
        <path d="M840 459h15v51h-15z" fill="#a0a0a0" />
        <path d="M794 465v38" stroke="#b5b52a" strokeWidth="3" />
        <OctPad x={700} y={394} />
        <OctPad x={700} y={578} />
        <OctPad x={925} y={484} />
        <Plus x={812} y={512} r={10} />
        <Plus x={782} y={552} r={10} />
        <Plus x={688} y={532} r={10} />

        {/* routed traces */}
        <g fill="none" stroke="#b01212" strokeWidth="3">
          <path d="M265 84V73h367v112M311 187l-46 46v44h208v47" />
          <path d="M151 415v-91l33-34h115l57 56v56l46 41M238 415l48 48h116" />
          <path d="M585 451h15l31 33v69l24 24h45" />
          <path d="M585 413h46l68 70h226" stroke="#c01515" strokeWidth="6" />
        </g>
      </svg>
      <g fill="#b4b4b4" fontSize="10">
        <text x="208" y="255" fontSize="9">RN2</text>
        <text x="262" y="255" fontSize="9">RN1</text>
        <text x="311" y="288">15KEXX</text>
        <text x="354" y="318">D1</text>
        <text x="261" y="395">Q1</text>
        <text x="327" y="339" fontSize="6">IC1</text>
        <text x="326" y="377" fontSize="6" fill="#e8e8e8">MEGA8-AI</text>
        <text x="438" y="469">NC-2V4</text>
        <text x="408" y="408" transform="rotate(-90 408 408)" fontSize="9">G1</text>
        <text x="440" y="415" transform="rotate(-90 440 415)" fontSize="9">2V110R</text>
      </g>
    </svg>
  );
}

function FusionLogo() {
  return (
    <svg width="17" height="17" viewBox="0 0 17 17">
      <rect width="17" height="17" rx="2" fill="#f5a21f" />
      <path d="M5 3h7v2H8v3h4v2H8v4H5z" fill="#4a3a1c" />
      <path d="M8 8h4v2H8z" fill="#8c6a35" />
    </svg>
  );
}

function MakeLogo() {
  return (
    <svg width="17" height="17" viewBox="0 0 17 17">
      <rect width="17" height="17" rx="2" fill="#1f8a43" />
      <path d="M5 3v11M7.500 3v11M10 3v11M12 3v11" stroke="#d8dc3a" />
      <rect x="4.500" y="5.500" width="8" height="6" fill="#1f8a43" stroke="#cdf0d6" strokeWidth="1.500" />
    </svg>
  );
}

const sideTabs = [
  { name: 'MANUFACTURING', logo: <MakeLogo />, spacing: 'pt-2 gap-[5px]' },
  { name: 'FUSION 360', logo: <FusionLogo />, spacing: 'pt-[19px] gap-[9px]' },
  { name: 'FUSION TEAM', logo: <FusionLogo />, spacing: 'pt-[19px] gap-[9px]' },
];

function Editor() {
  return (
    <div className="flex min-w-0 flex-1 flex-col">
      <div className="flex h-[34px] shrink-0 items-center pr-1 pl-[7px] text-[13px]">
        <label htmlFor="command" className="w-[134px] shrink-0">50 mil (3400 250)</label>
        <div className="relative flex-1">
          <input id="command" type="text" className="h-[26px] w-full border border-[#0696d7] bg-white px-1 outline-none" />
          <Caret className="top-[10px] right-[5px]" />
        </div>
      </div>
      <div className="flex min-h-0 flex-1">
        <div className="relative flex-1 overflow-hidden bg-[#282828]">
          <Board />
          <div className="absolute top-[9px] right-[3px] flex flex-col gap-4">
            {sideTabs.map(({ name, logo, spacing }) => (
              <button
                key={name}
                type="button"
                className={clsx("flex h-[145px] w-[27px] flex-col items-center bg-[#454545] font-['Open_Sans',sans-serif] text-[12px] leading-4 font-semibold text-white", spacing)}
              >
                {logo}
                <span className="[writing-mode:vertical-rl]">{name}</span>
              </button>
            ))}
          </div>
        </div>
        <div className="w-4 shrink-0 bg-[#ededed] pl-[5px]">
          <div className="h-full w-[6px] rounded-full bg-[#808080]" />
        </div>
      </div>
      <div className="flex h-4 shrink-0 items-center bg-[#f6f6f6] pr-[78px]">
        <div className="ml-[125px] h-[6px] flex-1 rounded-full bg-[#808080]" />
      </div>
    </div>
  );
}

function DocIcon({ kind }: { kind: 'SCH' | 'BRD' }) {
  return (
    <svg width="15" height="16" viewBox="0 0 15 16" className="shrink-0">
      <path d="M2 0h11v12l-4 4H2z" fill="#f4f4f4" />
      <path d="M13 11v1l-4 4v-5z" fill="#555" />
      <path d="M0 1h15v9H0z" fill={kind === 'SCH' ? '#d62b27' : '#1d9a4a'} />
      <text x="7.500" y="8" textAnchor="middle" fontSize="7" fontWeight="700" fill="#fff">{kind}</text>
    </svg>
  );
}

function CaptionButtons({ active }: { active?: boolean }) {
  return (
    <div className={clsx('flex h-[18px] shrink-0 overflow-hidden rounded-b border border-t-0', active ? 'border-[#eef4fa]' : 'border-[#7ea3cc]')}>
      <button type="button" aria-label="Minimize" className={clsx('flex w-[28px] items-center justify-center border-r pt-1', active ? 'border-[#eef4fa] bg-linear-to-b from-[#c3cdda] to-[#8f9fb5]' : 'border-[#7ea3cc]')}>
        <span className="h-1 w-3 border border-[#53607a] bg-white" />
      </button>
      <button type="button" aria-label="Maximize" className={clsx('flex w-[27px] items-center justify-center border-r', active ? 'border-[#eef4fa] bg-linear-to-b from-[#c3cdda] to-[#8f9fb5]' : 'border-[#7ea3cc]')}>
        <span className="flex h-[10px] w-3 items-center justify-center border border-[#53607a] bg-white">
          <span className="h-1 w-1.5 border border-[#53607a] bg-[#9fb1c9]" />
        </span>
      </button>
      <button type="button" aria-label="Close" className={clsx('flex w-[47px] items-center justify-center', active && 'bg-linear-to-b from-[#e0a79d] via-[#c8402b] to-[#cf5a44]')}>
        <svg width="11" height="10" viewBox="0 0 11 10">
          <path d="M1.500 1l8 8M9.500 1l-8 8" stroke="#53607a" strokeWidth="4" />
          <path d="M1.500 1l8 8M9.500 1l-8 8" stroke="#fff" strokeWidth="2.400" />
        </svg>
      </button>
    </div>
  );
}

const treeRows = ['aries', 'ign Blo', 'ign Ru', 'r Lang', 'ots', 'M Jobs', 'CE Mo', 'ects'];

function ControlPanel() {
  return (
    <div className="absolute top-[26px] right-[13px] bottom-[27px] left-0 flex flex-col rounded-t-md border border-l-0 border-[#9fc0e4] bg-[#3f6fa8] pr-[5px]">
      <div className="h-7 shrink-0 bg-linear-to-r from-[#8fb2dc] to-[#3f6fa8] to-20% pt-1.5 text-[12px] leading-4 font-normal text-black">rol Par</div>
      <div className="flex h-[34px] shrink-0 items-center gap-2.5 border-t border-[#333] bg-[#ccc] text-[14px]"><span>ew</span><span>O</span></div>
      <div className="flex flex-1 flex-col bg-[#ededed] text-[13px] leading-[14px]">
        <div className="h-[19px] w-16 shrink-0 bg-linear-to-b from-[#f2fafe] to-[#cde9f8]" />
        <ul className="w-16">
          {treeRows.map((row) => (
            <li key={row} className="h-[14px] whitespace-nowrap odd:bg-[#f5f5f5]">{row}</li>
          ))}
          <li className="flex h-[18px] items-center gap-1">
            <svg width="12" height="12" viewBox="0 0 12 12" className="shrink-0"><path d="M0 1h6l1 2h3v2M0 11h9l3-6H2L0 9" fill="#f8f8f8" stroke="#888" /></svg>
            pro
          </li>
          <li className="flex h-[18px] items-center gap-[11px] bg-[#0696d7]">
            <svg width="7" height="8" viewBox="0 0 7 8" className="shrink-0"><path d="M0 0h7L3 8z" fill="#666" /></svg>
            <span className="text-[18px] font-black text-[#b08a68]">E</span>
          </li>
          <li className="mt-9 flex h-[18px] items-center gap-[5px]">
            <svg width="12" height="12" viewBox="0 0 12 12" className="shrink-0"><path d="M0 .5h5l1 2h5.500v9H0" fill="#f8f8f8" stroke="#888" /></svg>
            exa
          </li>
        </ul>
        <div className="mt-auto h-[5px] bg-[#808080]" />
        <div className="mt-1.5 flex h-[22px] items-center border-y border-[#777] text-[13px]">ers₩A</div>
      </div>
    </div>
  );
}

export default function App() {
  return (
    <div className="relative h-screen overflow-hidden bg-linear-to-r from-[#0c3f93] via-[#0b4aa0] to-[#0c4a8c] font-[Roboto,'Noto_Sans_CJK_KR',sans-serif] font-light text-[#222]">
      {/* desktop behind the windows */}
      <svg width="46" height="46" viewBox="0 0 46 46" className="absolute top-[3px] left-[12px]">
        <circle cx="23" cy="23" r="22" fill="#e2453a" />
        <path d="M3 14l12 18-2 12A22 22 0 013 14z" fill="#2fa257" />
        <circle cx="23" cy="23" r="10" fill="#4688f1" stroke="#fff" strokeWidth="3" />
      </svg>
      <div className="absolute bottom-0 left-0 h-[27px] w-full bg-[#10203c] text-[12px] leading-3 font-bold whitespace-nowrap text-[#c8ced8]">
        <p>UMPA</p>
        <p className="font-normal text-[#8b6d66]">s for e</p>
      </div>
      <ControlPanel />

      {/* browser window peeking out on the right */}
      <div className="absolute top-[111px] right-0 bottom-0 flex w-20 flex-col border-t border-[#a9c4e4] bg-white">
        <div className="h-[45px] shrink-0 bg-linear-to-r from-[#dff0f8] from-65% to-[#134a8c] to-85%" />
        <div className="mt-1 h-7 shrink-0 bg-[#f1f3f4]" />
        <div className="mt-1 h-px shrink-0 bg-[#b0b0b0]" />
        <div className="mt-[72px] h-px shrink-0 bg-[#e8e8e8]" />
        <div className="mt-auto h-[25px] bg-[#f4f4f4]"><div className="h-[13px] border-b border-[#ccc]" /></div>
      </div>

      {/* schematic window */}
      <section className="absolute -top-1.5 right-[49px] bottom-4 left-[34px] rounded-md border border-[#8fb0d6] bg-[#8fa3b4] shadow-[0_0_8px_#000]">
        <header className="flex h-[30px] justify-between bg-linear-to-r from-[#5f8cc2] via-[#1459a6] via-60% to-[#3f6fa8] pr-1 pl-[7px]">
          <h1 className="flex items-center gap-[5px] pt-1 text-[12px] font-normal whitespace-nowrap text-black">
            <DocIcon kind="SCH" />
            1 Schematic - C:₩Users₩Administrator₩Documents₩EAGLE₩projects₩TEST₩test.sch - EAGLE 9.5.0 free [OFFLINE]
          </h1>
          <div className="pt-[3px]"><CaptionButtons /></div>
        </header>
      </section>

      {/* board window */}
      <section className="absolute top-[23px] right-[39px] -bottom-px left-[44px] flex flex-col rounded-t-md border border-[#e4eff9] bg-[#b7d5f4] pr-[5px] pl-1.5 shadow-[0_0_0_1px_#1c2836,0_0_16px_rgba(0,0,0,0.8)]">
        <header className="-mr-[5px] -ml-1.5 flex h-[27px] shrink-0 justify-between rounded-t-md bg-linear-to-r from-[#dbe6f1] to-[#98b4d1] to-55% pr-1 pl-1.5">
          <h1 className="flex items-center gap-1.5 text-[12px] font-normal whitespace-nowrap text-black">
            <DocIcon kind="BRD" />
            2 Board - C:₩Users₩Administrator₩Documents₩EAGLE₩projects₩TEST₩test.brd - EAGLE 9.5.0 free [OFFLINE]
          </h1>
          <CaptionButtons active />
        </header>
        <main className="flex min-h-0 flex-1 flex-col border border-b-0 border-[#5d6875] bg-[#ededed]">
          <nav className="flex h-8 shrink-0 items-center gap-[11px] bg-[#ccc] pl-1 text-[14px]">
            {['File', 'Edit', 'Draw', 'View', 'Tools', 'Library', 'Options', 'Window', 'Help'].map((item) => (
              <button key={item} type="button">{item}</button>
            ))}
          </nav>
          <div className="flex h-10 shrink-0 items-center overflow-hidden border-t border-b border-t-[#bbb] border-b-[#999] bg-[#d9d9d9] pl-[5px]">
            <Grip />
            <div className="w-1 shrink-0" />
            {mainBar.map((item, i) =>
              item ? (
                <Tool key={i} icon={item[0]} label={item[1]} menu={item[2]} className="h-[30px] w-[35px]" />
              ) : (
                <Sep key={i} className="mx-1" />
              )
            )}
            <Sep className="-ml-px" />
            <button type="button" className="ml-[18px] flex shrink-0 items-center gap-[3px] text-left text-[9px] leading-[8px] font-bold text-[#555]">
              <svg width="12" height="12" viewBox="0 0 12 12">
                <path d="M5 7L8 4M6 3l2-2a2 2 0 013 3L9 6M6 9l-2 2a2 2 0 01-3-3l2-2" fill="none" stroke="#666" strokeWidth="1.400" />
              </svg>
              <span className="flex flex-col"><span>DESIGN</span><span>LINK</span></span>
            </button>
            <button type="button" className="ml-[19px] flex shrink-0 items-center gap-1.5 text-left text-[9px] leading-[8px] font-bold text-[#555]">
              <svg width="12" height="13" viewBox="0 0 12 13">
                <path d="M.5.5h11v12H.5z" fill="#eee" stroke="#888" />
                <path d="M0 0h12v3H0zM2 5h8v1H2zM2 7h8v1H2zM2 9h8v1H2z" fill="#666" />
              </svg>
              <span className="flex flex-col"><span>PCB</span><span>QUOTE</span></span>
            </button>
          </div>
          <ParameterBar />
          <div className="flex min-h-0 flex-1">
            <aside className="flex w-[69px] shrink-0 flex-col overflow-hidden border-r border-[#d5d5d5]">
              <div className="mx-2 mt-2 mb-[5px] h-1 shrink-0 border-y border-[#c0c0c0]" />
              {toolRows.map((row, i) =>
                row ? (
                  <div key={i} className="flex h-[33px] shrink-0">
                    {row.map((tool) => tool && <Tool key={tool.label} {...tool} className="h-[31px] w-[33px]" />)}
                  </div>
                ) : (
                  <div key={i} className="mb-px h-px shrink-0 bg-[#c4c4c4]" />
                )
              )}
              <button type="button" aria-label="More tools" className="mx-auto mt-[22px]">
                <svg width="10" height="9" viewBox="0 0 10 9">
                  <path d="M1 0l4 3 4-3M1 5l4 3 4-3" fill="none" stroke="#444" strokeWidth="1.500" />
                </svg>
              </button>
            </aside>
            <SelectionFilter />
            <div className="w-1 shrink-0 bg-[#d9d9d9]" />
            <Editor />
          </div>
          <footer className="flex h-6 shrink-0 items-center justify-between border-t border-[#808080] pr-[17px] pl-px text-[13px]">
            <p>Signal: N$8, Class: 0 default Left-click to select signal object to route</p>
            <div className="flex h-full items-center border-x border-[#ccc]">
              <span className="flex h-full w-[26px] items-center justify-center border-r border-[#ccc]">
                <svg width="20" height="20" viewBox="0 0 20 20"><path d="M15 0L0 10l7 2-3 8 16-11-7-1z" fill="#17b24c" /></svg>
              </span>
              <span className="flex w-[26px] justify-center">
                <svg width="20" height="20" viewBox="0 0 20 20">
                  <circle cx="10" cy="10" r="10" fill="#606060" />
                  <path d="M8.500 3h3l-.5 9H9zM8.700 14h2.600v3H8.700z" fill="#fff" />
                </svg>
              </span>
            </div>
          </footer>
        </main>
      </section>

      {/* hand-drawn highlights */}
      <svg className="pointer-events-none absolute inset-0 h-full w-full" fill="none" stroke="#ed1c24" strokeLinejoin="round">
        <path d="M207 140l23-2 100-3h740l60 3 33 2 6 3v25l-12 2-80 2-50 1H260l-45-3-19-3-2-22 5-4z" strokeWidth="4.500" />
        <ellipse cx="58.500" cy="404" rx="19.500" ry="23" strokeWidth="5" />
      </svg>
    </div>
  );
}
